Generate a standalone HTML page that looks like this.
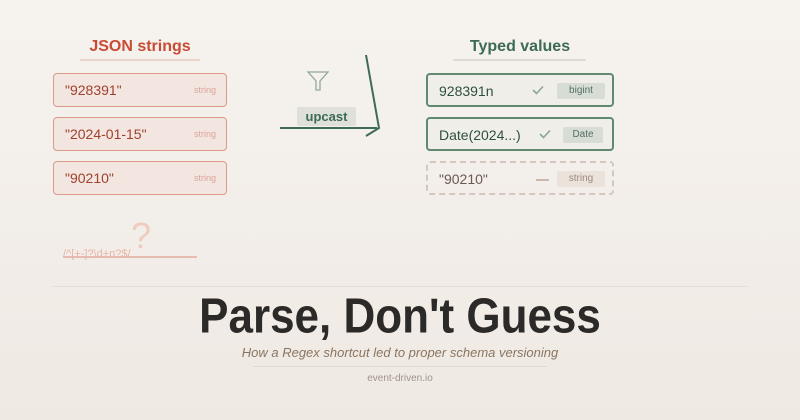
<!DOCTYPE html>
<html><head><meta charset="utf-8"><style>
*{margin:0;padding:0;box-sizing:border-box}
body{width:800px;height:420px;overflow:hidden;background:linear-gradient(#f6f3ef,#efe9e3);font-family:"Liberation Sans",sans-serif;position:relative}
.a{position:absolute}
.h{font-weight:bold;font-size:16px;text-align:center}
.box{position:absolute;height:34px;border:1.5px solid #dc9a8a;border-radius:4px;background:#f3e6e0;font-size:14px;color:#a0402e;padding:0 0 0 11px;line-height:32px}
.box span{position:absolute;right:10px;top:0;font-size:9px;color:#dca498}
.g{border-color:#5f8a70;background:#efeee8;color:#2f4f3f;border-width:2px}
.tag{position:absolute;top:8px;height:16px;line-height:16px;font-size:10px;border-radius:2px;text-align:center;background:#d7ddd5;color:#527062}
.ck{position:absolute;top:10px}
</style></head><body>
<div class="a h" style="left:60px;top:38px;width:160px;color:#c84c35">JSON strings</div>
<div class="a" style="left:80px;top:59px;width:120px;height:1.5px;background:#ead5cc"></div>
<div class="a h" style="left:440px;top:38px;width:160px;color:#3b6b55">Typed values</div>
<div class="a" style="left:453px;top:59px;width:133px;height:1.5px;background:#dcdcd4"></div>

<div class="box" style="left:53px;top:73px;width:174px">"928391"<span>string</span></div>
<div class="box" style="left:53px;top:117px;width:174px">"2024-01-15"<span>string</span></div>
<div class="box" style="left:53px;top:161px;width:174px">"90210"<span>string</span></div>

<div class="box g" style="left:426px;top:73px;width:188px">928391n<svg class="ck" style="left:104px" width="12" height="10"><path d="M1 5 L4.5 8.5 L11 1.5" fill="none" stroke="#8aa696" stroke-width="1.6"/></svg><div class="tag" style="left:129px;width:48px">bigint</div></div>
<div class="box g" style="left:426px;top:117px;width:188px">Date(2024...)<svg class="ck" style="left:111px" width="12" height="10"><path d="M1 5 L4.5 8.5 L11 1.5" fill="none" stroke="#8aa696" stroke-width="1.6"/></svg><div class="tag" style="left:135px;width:40px">Date</div></div>
<div class="box" style="left:426px;top:161px;width:188px;border:2px dashed #d6c7be;background:transparent;color:#6a5a52">"90210"<div class="a" style="left:108px;top:16px;width:13px;height:1.5px;background:#c8b8ae"></div><div class="tag" style="left:129px;width:48px;background:#ebe2dc;color:#9c8a80">string</div></div>

<svg class="a" style="left:0;top:0" width="800" height="300">
<path d="M308 72 H328 L320 81 V90 H316 V81 Z" fill="none" stroke="#93a89a" stroke-width="1.3"/>
<path d="M280 128 H377 M366 55 L379 128 L366 136" fill="none" stroke="#3e6b55" stroke-width="2"/>
<line x1="63" y1="257" x2="197" y2="257" stroke="#e0a090" stroke-width="1.2"/>
</svg>
<div class="a" style="left:297px;top:107px;width:59px;height:19px;background:#dfe1d9;border-radius:2px;color:#3c6b55;font-weight:bold;font-size:13px;text-align:center;line-height:19px">upcast</div>
<div class="a" style="left:131px;top:215px;font-size:36px;color:#f0cbc0">?</div>
<div class="a" style="left:63px;top:248px;font-size:11px;color:#e8b5a8">/^[+-]?\d+n?$/</div>

<div class="a" style="left:52px;top:286px;width:696px;height:1px;background:#e6dfd8"></div>
<div class="a" style="left:0;top:292px;width:800px;text-align:center;font-size:44px;line-height:50px;font-weight:bold;color:#2c2a28;transform:scaleY(1.12)">Parse, Don't Guess</div>
<div class="a" style="left:0;top:345px;width:800px;text-align:center;font-size:13px;font-style:italic;color:#8a7660">How a Regex shortcut led to proper schema versioning</div>
<div class="a" style="left:253px;top:366px;width:294px;height:1px;background:#e2dad2"></div>
<div class="a" style="left:0;top:373px;width:800px;text-align:center;font-size:10px;color:#a0948a">event-driven.io</div>
</body></html>
